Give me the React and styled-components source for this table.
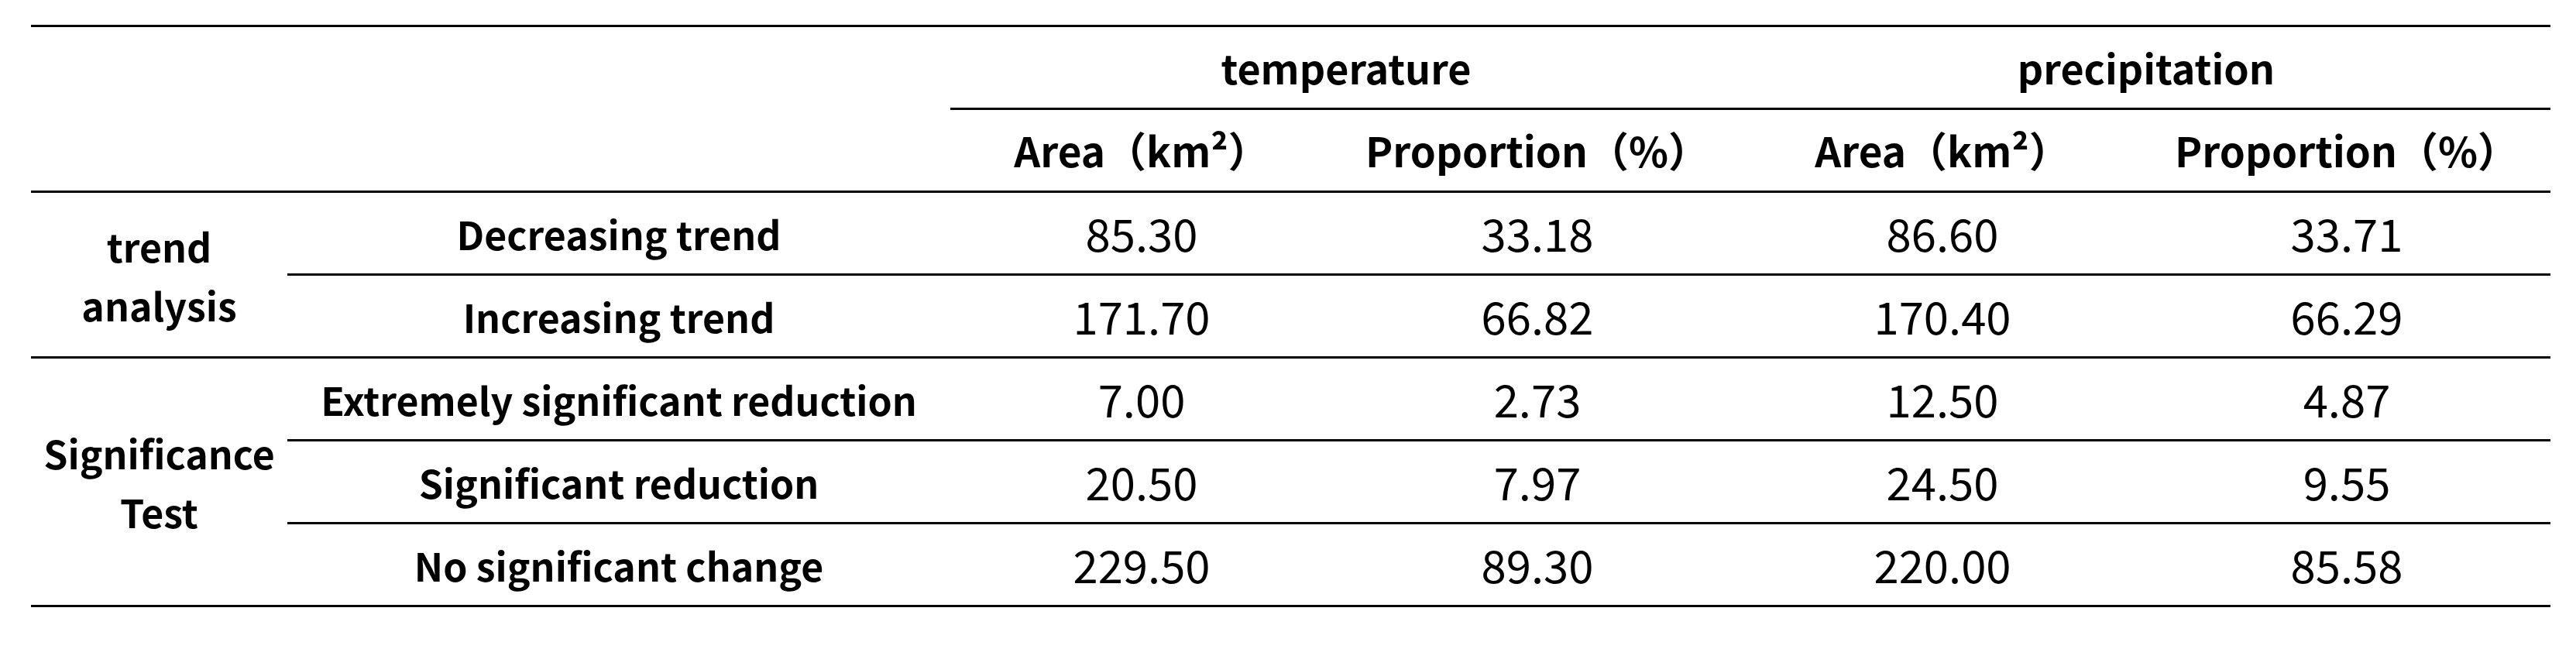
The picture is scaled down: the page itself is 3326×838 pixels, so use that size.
import React from "react";
import styled, { createGlobalStyle } from "styled-components";

const GlobalStyle = createGlobalStyle`
  html, body {
    margin: 0;
    padding: 0;
    background: #ffffff;
  }
  body {
    font-family: "Noto Sans CJK SC", "Noto Sans", sans-serif;
    color: #000;
  }
`;

const Page = styled.div`
  padding: 32px 0 0 40px;
  width: 3326px;
  height: 838px;
  box-sizing: border-box;
`;

const Table = styled.table`
  border-collapse: separate;
  border-spacing: 0;
  table-layout: fixed;
  width: 3253px;
  border-top: 3px solid #000;
`;

const Cell = styled.td`
  box-sizing: border-box;
  height: 107px;
  padding: 0;
  text-align: center;
  vertical-align: middle;
  border-bottom: 3px solid #000;
  font-family: "Noto Sans CJK SC", "Noto Sans", sans-serif;
  font-size: ${(p) => p.$size || 50}px;
  font-weight: ${(p) => (p.$num ? 400 : 700)};
  line-height: ${(p) => (p.$group ? "76px" : "1.2")};
  white-space: nowrap;
`;

const columns = [331, 856, 494, 528, 518, 526];

const groups = [
  {
    label: ["trend", "analysis"],
    rows: [
      ["Decreasing trend", "85.30", "33.18", "86.60", "33.71"],
      ["Increasing trend", "171.70", "66.82", "170.40", "66.29"],
    ],
  },
  {
    label: ["Significance", "Test"],
    rows: [
      ["Extremely significant reduction", "7.00", "2.73", "12.50", "4.87"],
      ["Significant reduction", "20.50", "7.97", "24.50", "9.55"],
      ["No significant change", "229.50", "89.30", "220.00", "85.58"],
    ],
  },
];

export default function App() {
  return (
    <>
      <GlobalStyle />
      <Page>
        <Table>
          <colgroup>
            {columns.map((w, i) => (
              <col key={i} style={{ width: w }} />
            ))}
          </colgroup>
          <thead>
            <tr>
              <Cell as="th" colSpan={2} rowSpan={2} />
              <Cell as="th" $size={52} colSpan={2}>
                temperature
              </Cell>
              <Cell as="th" $size={52} colSpan={2}>
                precipitation
              </Cell>
            </tr>
            <tr>
              <Cell as="th" $size={53}>Area（km²）</Cell>
              <Cell as="th" $size={53}>Proportion（%）</Cell>
              <Cell as="th" $size={53}>Area（km²）</Cell>
              <Cell as="th" $size={53}>Proportion（%）</Cell>
            </tr>
          </thead>
          <tbody>
            {groups.map((g) =>
              g.rows.map((r, i) => (
                <tr key={r[0]}>
                  {i === 0 && (
                    <Cell as="th" $group rowSpan={g.rows.length}>
                      {g.label[0]}
                      <br />
                      {g.label[1]}
                    </Cell>
                  )}
                  <Cell as="th">{r[0]}</Cell>
                  {r.slice(1).map((v, j) => (
                    <Cell $num $size={58} key={j}>
                      {v}
                    </Cell>
                  ))}
                </tr>
              ))
            )}
          </tbody>
        </Table>
      </Page>
    </>
  );
}
